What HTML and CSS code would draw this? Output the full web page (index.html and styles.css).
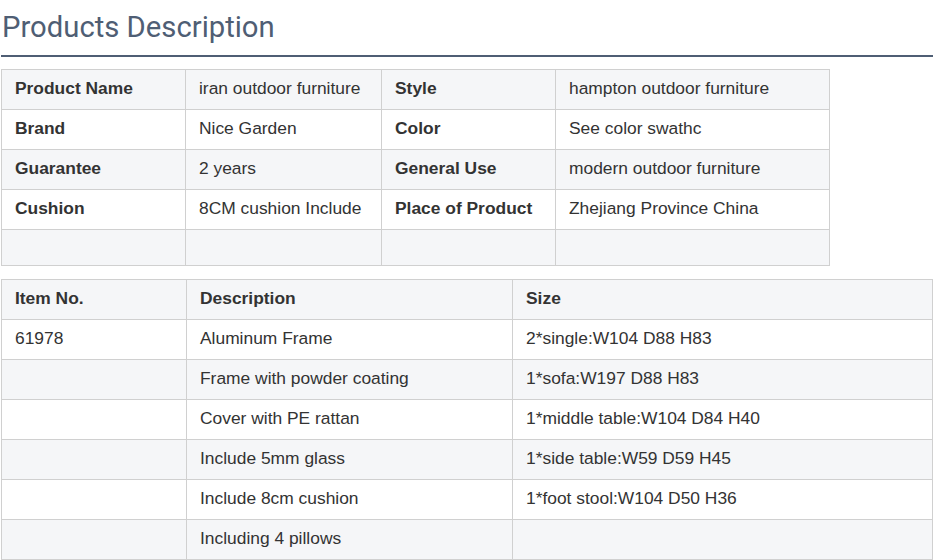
FILE: index.html
```html
<!DOCTYPE html>
<html>
<head>
<meta charset="utf-8">
<link rel="stylesheet" href="styles.css">
</head>
<body>
<div class="page">
  <h2 class="title">Products Description</h2>
  <table class="spec">
    <tbody>
      <tr><th>Product Name</th><td>iran outdoor furniture</td><th>Style</th><td>hampton outdoor furniture</td></tr>
      <tr><th>Brand</th><td>Nice Garden</td><th>Color</th><td>See color swathc</td></tr>
      <tr><th>Guarantee</th><td>2 years</td><th>General Use</th><td>modern outdoor furniture</td></tr>
      <tr><th>Cushion</th><td>8CM cushion Include</td><th>Place of Product</th><td>Zhejiang Province China</td></tr>
      <tr class="empty"><td></td><td></td><td></td><td></td></tr>
    </tbody>
  </table>
  <table class="items">
    <colgroup><col class="c1"><col class="c2"><col class="c3"></colgroup>
    <tbody>
      <tr><th>Item No.</th><th>Description</th><th>Size</th></tr>
      <tr><td>61978</td><td>Aluminum Frame</td><td>2*single:W104 D88 H83</td></tr>
      <tr><td></td><td>Frame with powder coating</td><td>1*sofa:W197 D88 H83</td></tr>
      <tr><td></td><td>Cover with PE rattan</td><td>1*middle table:W104 D84 H40</td></tr>
      <tr><td></td><td>Include 5mm glass</td><td>1*side table:W59 D59 H45</td></tr>
      <tr><td></td><td>Include 8cm cushion</td><td>1*foot stool:W104 D50 H36</td></tr>
      <tr><td></td><td>Including 4 pillows</td><td></td></tr>
    </tbody>
  </table>
</div>
</body>
</html>
```
FILE: styles.css
```css
html, body {
  margin: 0;
  padding: 0;
  background: #fff;
}
.page {
  padding: 0 0 0 1px;
  font-family: "Liberation Sans", Arial, sans-serif;
  font-size: 17.4px;
  color: #333;
}
.title {
  margin: 0;
  padding: 8px 0 9px 1px;
  font-family: Roboto, "Liberation Sans", sans-serif;
  font-weight: 400;
  font-size: 29.25px;
  line-height: 38px;
  color: #4f5e74;
  border-bottom: 2px solid #4f5e74;
}
table {
  border-collapse: collapse;
  font-size: 17.4px;
}
th, td {
  border: 1px solid #d0d0d0;
  padding: 7px 13px 9px;
  line-height: 23px;
  text-align: left;
  vertical-align: top;
}
th { font-weight: 700; }
tr:nth-child(odd) { background: #f5f6f8; }
.spec {
  margin-top: 12px;
}
.spec tr > :nth-child(1) { width: 157px; }
.spec tr > :nth-child(2) { width: 169px; }
.spec tr > :nth-child(3) { width: 147px; }
.spec tr > :nth-child(4) { width: 247px; }
.spec .empty td { height: 19px; }
.items {
  margin-top: 13px;
  width: 932px;
}
.items .c1 { width: 185px; }
.items .c2 { width: 326px; }
```
